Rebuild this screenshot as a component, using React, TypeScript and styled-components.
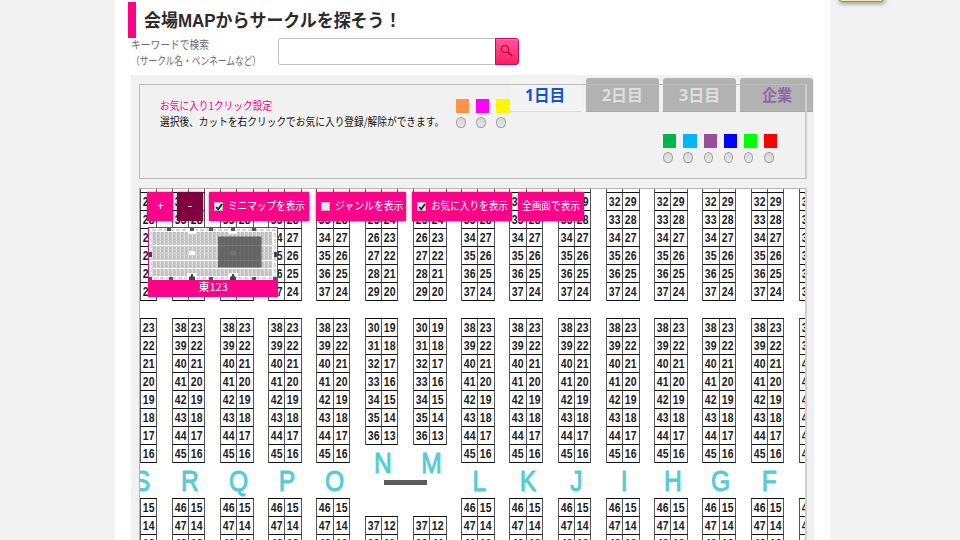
import React, { useLayoutEffect, useRef, useState } from "react";
import styled, { createGlobalStyle } from "styled-components";

const PINK = "#ff0088";
const JP = '"Noto Sans CJK JP", "Liberation Sans", sans-serif';

const GlobalStyle = createGlobalStyle`
  * { box-sizing: border-box; }
  body { margin: 0; background: #f2f2f2; overflow: hidden; font-family: ${JP}; }
`;

const Page = styled.div`
  position: relative;
  height: 540px;
  overflow: hidden;
`;

const Content = styled.main`
  width: 715px;
  height: 540px;
  margin-left: 115px;
  padding: 2px 16px 0;
  background: #fff;
`;

const Note = styled.div`
  position: absolute;
  left: 838px;
  top: -18px;
  width: 46px;
  height: 20px;
  border: 1px solid #949544;
  border-radius: 4px;
  background: #e9e9b4;
  box-shadow: 1px 2px 4px rgba(0, 0, 0, 0.35);
`;

const Heading = styled.h1`
  display: flex;
  align-items: center;
  height: 36px;
  margin: 0 0 0 -3px;
  padding: 0 0 3px 8px;
  border-left: 8px solid ${PINK};
  color: #2b2b2b;
  font-family: "Liberation Sans", "Noto Sans CJK JP", sans-serif;
  font-size: 18px;
  font-weight: 700;
`;

const SearchRow = styled.form`
  display: flex;
  height: 37px;
`;

const SearchLabel = styled.div`
  display: flex;
  flex-direction: column;
  width: 146.5px;
  color: #6c6c6c;
  font-size: 11px;
`;

const LabelLine = styled.div`
  height: 16px;
  line-height: 13px;
`;

const SearchInput = styled.input`
  width: 219px;
  height: 27px;
  border: 1px solid #c4c4c4;
  border-radius: 2px 0 0 2px;
  background: #fff;
`;

const SearchButton = styled.button`
  display: grid;
  place-items: center;
  width: 24px;
  height: 27px;
  margin-left: -1.5px;
  padding: 0 2px 2px 0;
  border: 1px solid #c40a5c;
  border-radius: 0 3px 3px 0;
  background: linear-gradient(#ff5599, #ff1c62);
  box-shadow: inset 0 1px #ff77ae;
`;

const Panel = styled.section`
  width: 683px;
  height: 465px;
  padding: 0 7px 0 8px;
  background: #f1f1f1;
`;

const Stage = styled.div`
  display: grid;
  height: 113px;
  > * { grid-area: 1 / 1; }
`;

const Tabs = styled.nav`
  display: flex;
  gap: 4px;
  justify-self: end;
  height: 34px;
  margin: 3px -6.4px 0 0;
`;

const Tab = styled.button<{ $active?: boolean; $color: string }>`
  display: flex;
  justify-content: center;
  width: ${(p) => (p.$active ? 71 : 73.2)}px;
  height: 34px;
  margin-right: ${(p) => (p.$active ? 1 : 0)}px;
  padding: 5px 0 0;
  border: 0;
  border-bottom: 1px solid ${(p) => (p.$active ? "#dadada" : "#ababab")};
  border-radius: 3px 3px 0 0;
  background: ${(p) => (p.$active ? "#f3f3f3" : "#b2b2b2")};
  color: ${(p) => p.$color};
  font: 700 16px/24px "Noto Sans", ${JP};
`;

const Settings = styled.div`
  display: flex;
  flex-direction: column;
  height: 95px;
  margin: 9px 0 0;
  padding: 14px 0 0 20px;
  border: 1px solid #bcbcbc;
  border-right: 2px solid #cecece;
`;

const SettingsTop = styled.div`
  display: flex;
  width: 100%;
  height: 35px;
`;

const Guide = styled.div`
  width: 296px;
  font-size: 11px;
`;

const GuideLine = styled.div<{ $pink?: boolean }>`
  height: 16px;
  line-height: ${(p) => (p.$pink ? 12 : 13)}px;
  color: ${(p) => (p.$pink ? PINK : "#111")};
`;

const Swatches = styled.div<{ $lower?: boolean }>`
  display: flex;
  gap: 7px;
  margin-left: ${(p) => (p.$lower ? 503.2 : 0)}px;
`;

const Choice = styled.label`
  display: flex;
  flex-direction: column;
  gap: 4px;
  width: 13.2px;
`;

const Swatch = styled.span<{ $color: string }>`
  width: 13.2px;
  height: 14px;
  background: ${(p) => p.$color};
`;

const Radio = styled.input.attrs({ type: "radio", name: "fav" })`
  appearance: none;
  width: 9.5px;
  height: 11px;
  margin: 0;
  border: 1px solid #a0a0a0;
  border-radius: 50%;
  background: linear-gradient(#d4d4d4, #e9e9e9);
`;

const MapView = styled.div`
  position: relative;
  width: 668px;
  height: 353px;
  overflow: hidden;
  border: 1px solid #b4b4b4;
  border-right: 2px solid #d0d0d0;
  background: #fff;
`;

const Islands = styled.div`
  display: grid;
  grid-template-columns: repeat(15, 48.25px);
  width: 724px;
  margin: -15px 0 0 -16.6px;
`;

const Island = styled.div`
  display: flex;
  flex-direction: column;
`;

const Block = styled.div<{ $gap?: number }>`
  display: grid;
  grid-template-columns: 16.3px 16.3px;
  grid-auto-rows: 18px;
  width: 33.6px;
  margin-top: ${(p) => p.$gap || 0}px;
  border-left: 1px solid #555;
  border-top: 1px solid #111;
`;

const Cell = styled.div`
  display: grid;
  place-items: center;
  border-right: 1px solid #555;
  border-bottom: 1px solid #111;
  color: #1c1c1c;
  font: 700 12px/18px "Liberation Sans", Arial, sans-serif;
`;

const Digits = styled.span`
  height: 17px;
  transform: scaleX(0.87);
`;

const IslandName = styled.div`
  width: 37px;
  height: 35px;
  line-height: 36px;
  text-align: center;
  color: #54ccd3;
  font-family: "Liberation Sans", Arial, sans-serif;
  font-size: 30px;
  -webkit-text-stroke: 1px #54ccd3;
`;

const Glyph = styled.span`
  display: inline-block;
  transform: scaleX(0.82);
`;

const Divider = styled.div`
  position: absolute;
  left: 244px;
  top: 291px;
  width: 43px;
  height: 5px;
  background: #5a5a5a;
`;

const Controls = styled.div`
  position: absolute;
  left: 7.4px;
  top: 3px;
  display: flex;
`;

const Control = styled.button<{ $w: number; $gap: number; $dark?: boolean }>`
  display: flex;
  flex: none;
  align-items: center;
  justify-content: ${(p) => (p.$w < 30 ? "center" : "flex-start")};
  gap: 4px;
  width: ${(p) => p.$w}px;
  height: 29px;
  margin-right: ${(p) => p.$gap}px;
  padding: 0 0 3px ${(p) => (p.$w < 30 ? 0 : 4)}px;
  border: 0;
  background: ${(p) => (p.$dark ? "#80003f" : PINK)};
  box-shadow: 0 0 3px rgba(0, 0, 0, 0.45);
  color: #fff;
  font: ${(p) => (p.$w < 30 ? '13px/26px "Noto Sans"' : "11px/24px " + JP)};
`;

const Check = styled.span`
  display: grid;
  place-items: center;
  width: 9px;
  height: 9px;
  margin: 3px 1px 0 1px;
  border: 1px solid #b5b5b5;
  background: #e6e6e6;
`;

const MiniMap = styled.div`
  position: absolute;
  left: 8px;
  top: 38px;
  width: 130px;
  height: 70px;
  border: 1px solid #d0108a;
  background: #fff;
  svg { display: block; }
`;

const MiniLabel = styled.div`
  display: flex;
  justify-content: center;
  height: 17px;
  margin: 0 -1px;
  background: ${PINK};
  color: #fff;
  font-size: 11px;
  line-height: 12px;
`;

const FitBox = styled.span<{ $w: number }>`
  display: block;
  flex: none;
  width: ${(p) => p.$w}px;
  white-space: nowrap;
`;

const FitInner = styled.span`
  display: inline-block;
  transform-origin: left center;
`;

/* Condenses a line of text horizontally to an exact width. */
function Fit({ w, children }: { w: number; children: string }) {
  const ref = useRef<HTMLSpanElement>(null);
  const [scale, setScale] = useState(1);
  useLayoutEffect(() => {
    if (ref.current) setScale(w / ref.current.offsetWidth);
  }, [w, children]);
  return (
    <FitBox $w={w}>
      <FitInner ref={ref} style={{ transform: `scaleX(${scale})` }}>{children}</FitInner>
    </FitBox>
  );
}

function Rows({ left, right, count, gap }: { left: number; right: number; count: number; gap?: number }) {
  return (
    <Block $gap={gap}>
      {Array.from({ length: count }, (_, i) => (
        <React.Fragment key={i}>
          <Cell><Digits>{left + i}</Digits></Cell>
          <Cell><Digits>{right - i}</Digits></Cell>
        </React.Fragment>
      ))}
    </Block>
  );
}

function IslandColumn({ name }: { name: string }) {
  const short = name === "N" || name === "M";
  return (
    <Island>
      <Rows left={short ? 23 : 31} right={short ? 26 : 30} count={7} />
      <Rows left={short ? 30 : 38} right={short ? 19 : 23} count={short ? 7 : 8} gap={17} />
      <IslandName><Glyph>{name}</Glyph></IslandName>
      <Rows left={short ? 37 : 46} right={short ? 12 : 15} count={3} gap={short ? 36 : 0} />
    </Island>
  );
}

function Choices({ colors, lower }: { colors: string[]; lower?: boolean }) {
  return (
    <Swatches $lower={lower}>
      {colors.map((c) => (
        <Choice key={c}><Swatch $color={c} /><Radio /></Choice>
      ))}
    </Swatches>
  );
}

function Toggle({ on }: { on?: boolean }) {
  return (
    <Check>
      {on && (
        <svg width="8" height="8" viewBox="0 0 8 8">
          <path d="M1.2 4 3.2 6.3 7 1" fill="none" stroke="#222" strokeWidth="1.8" />
        </svg>
      )}
    </Check>
  );
}

function MiniMapDrawing() {
  return (
    <svg width="128" height="52" viewBox="0 0 128 52">
      <defs>
        <pattern id="desks" width="4" height="3" patternUnits="userSpaceOnUse">
          <rect width="4" height="3" fill="#e2e2e2" />
          <rect width="2.7" height="3" fill="#bdbdbd" />
          <rect width="4" height="0.7" fill="#cfcfcf" />
        </pattern>
      </defs>
      <rect x="3" y="2" width="123" height="48" fill="none" stroke="#aaa" strokeDasharray="4 2" />
      {[[4, 13], [18, 14], [33, 7], [41, 7]].map(([y, h]) => (
        <rect key={y} x="3" y={y} width="120" height={h} fill="url(#desks)" />
      ))}
      <path d="M2 25.5H126" stroke="#a9dfe1" strokeDasharray="7 2" />
      {[43, 84].map((x) => (
        <g key={x}>
          <rect x={x - 4} y="1" width="8" height="5" fill="#fff" />
          <rect x={x - 3} y="23" width="6" height="4" rx="1" fill="#fff" />
          <rect x={x - 5} y="45" width="10" height="7" fill="#fff" />
          <path d={`M${x - 3} 52v-3l2-1v-2h2v2l2 1v3z`} fill="#444" />
        </g>
      ))}
      {[20, 43, 62, 84, 105].map((x) => (
        <rect key={x} x={x - 2} y="0" width="4" height="3" fill="#555" />
      ))}
      {[1, 22, 62, 105, 126].map((x) => (
        <rect key={x} x={x - 2} y="49" width="4" height="3" fill="#555" />
      ))}
      <rect x="0" y="24" width="3" height="5" fill="#444" />
      <rect x="125" y="24" width="3" height="5" fill="#444" />
      <rect x="69" y="8.5" width="43.5" height="31" fill="#484848" fillOpacity="0.77" />
    </svg>
  );
}

export default function App() {
  return (
    <Page>
      <GlobalStyle />
      <Note />
      <Content>
        <Heading><Fit w={257}>会場MAPからサークルを探そう！</Fit></Heading>
        <SearchRow>
          <SearchLabel>
            <LabelLine><Fit w={78}>キーワードで検索</Fit></LabelLine>
            <LabelLine><Fit w={130}>（サークル名・ペンネームなど）</Fit></LabelLine>
          </SearchLabel>
          <SearchInput aria-label="キーワード" />
          <SearchButton type="button" aria-label="検索">
            <svg width="13" height="13" viewBox="0 0 13 13" fill="none" stroke="#b5174f">
              <circle cx="5" cy="5" r="3.6" strokeWidth="1.5" />
              <path d="M7.8 7.8 12 12" strokeWidth="2.2" />
            </svg>
          </SearchButton>
        </SearchRow>
        <Panel>
          <Stage>
            <Tabs>
              <Tab $active $color="#1450cf"><Fit w={40}>1日目</Fit></Tab>
              <Tab $color="#dedede"><Fit w={41}>2日目</Fit></Tab>
              <Tab $color="#dedede"><Fit w={41}>3日目</Fit></Tab>
              <Tab $color="#8a6aa5"><Fit w={30}>企業</Fit></Tab>
            </Tabs>
            <Settings>
              <SettingsTop>
                <Guide>
                  <GuideLine $pink><Fit w={112}>お気に入り1クリック設定</Fit></GuideLine>
                  <GuideLine><Fit w={284}>選択後、カットを右クリックでお気に入り登録/解除ができます。</Fit></GuideLine>
                </Guide>
                <Choices colors={["#ff924b", "#ff00ff", "#fff600"]} />
              </SettingsTop>
              <Choices lower colors={["#00b54b", "#00b4ff", "#9a4d9c", "#0000ff", "#00ff00", "#ff0000"]} />
            </Settings>
          </Stage>
          <MapView>
            <Islands>
              {"SRQPONMLKJIHGFE".split("").map((n) => <IslandColumn key={n} name={n} />)}
            </Islands>
            <Divider />
            <Controls>
              <Control $w={26} $gap={3.5}>+</Control>
              <Control $w={26} $gap={6.2} $dark>-</Control>
              <Control $w={99.8} $gap={6.8}><Toggle on /><Fit w={77}>ミニマップを表示</Fit></Control>
              <Control $w={90} $gap={6.3}><Toggle /><Fit w={68}>ジャンルを表示</Fit></Control>
              <Control $w={99.7} $gap={6.7}><Toggle on /><Fit w={77}>お気に入りを表示</Fit></Control>
              <Control $w={66} $gap={0}><Fit w={58}>全画面で表示</Fit></Control>
            </Controls>
            <MiniMap>
              <MiniMapDrawing />
              <MiniLabel><Fit w={29}>東123</Fit></MiniLabel>
            </MiniMap>
          </MapView>
        </Panel>
      </Content>
    </Page>
  );
}
